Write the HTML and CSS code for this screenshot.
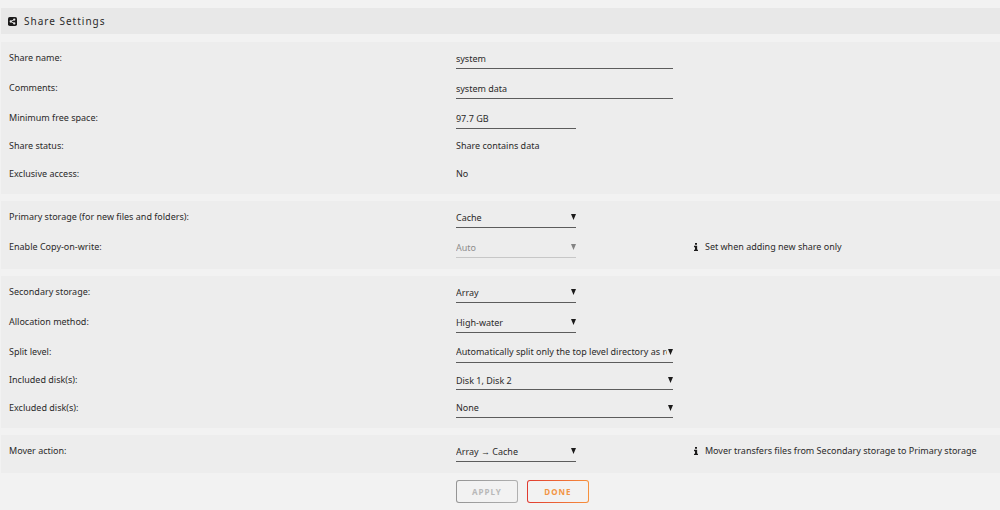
FILE: index.html
```html
<!DOCTYPE html>
<html lang="en">
<head>
<meta charset="utf-8">
<title>Share Settings</title>
<link rel="stylesheet" href="styles.css">
</head>
<body>
<header class="title-bar">
  <svg class="title-icon" viewBox="0 0 18 18" aria-hidden="true"><rect width="18" height="18" rx="3.5" fill="#1c1b1b"/><path d="M12.5 5.200 5.500 9l7 3.800" fill="none" stroke="#e8e8e8" stroke-width="1.800"/><circle cx="12.500" cy="5.200" r="2.300" fill="#e8e8e8"/><circle cx="5.500" cy="9" r="2.300" fill="#e8e8e8"/><circle cx="12.500" cy="12.800" r="2.300" fill="#e8e8e8"/></svg>
  <h1 class="title">Share Settings</h1>
</header>
<form class="settings">
  <section class="panel">
    <div class="row"><label class="label" for="name">Share name:</label><input class="field wide" id="name" type="text" value="system"></div>
    <div class="row"><label class="label" for="comments">Comments:</label><input class="field wide" id="comments" type="text" value="system data"></div>
    <div class="row short"><label class="label" for="free">Minimum free space:</label><input class="field narrow" id="free" type="text" value="97.7 GB"></div>
    <div class="row compact"><span class="label">Share status:</span><span class="value">Share contains data</span></div>
    <div class="row compact"><span class="label">Exclusive access:</span><span class="value">No</span></div>
  </section>
  <section class="panel">
    <div class="row"><label class="label" for="primary">Primary storage (for new files and folders):</label><select class="field narrow" id="primary"><option>Cache</option></select></div>
    <div class="row"><label class="label" for="cow">Enable Copy-on-write:</label><select class="field narrow" id="cow" disabled><option>Auto</option></select>
      <span class="note"><svg class="info-icon" viewBox="0 0 6 12" aria-hidden="true"><path d="M1.500 0h3v2.600h-3zM0 4.200h4.700v5.800H6v2H0v-2h1.500V6.200H0z" fill="#1c1b1b"/></svg>Set when adding new share only</span></div>
  </section>
  <section class="panel">
    <div class="row"><label class="label" for="secondary">Secondary storage:</label><select class="field narrow" id="secondary"><option>Array</option></select></div>
    <div class="row"><label class="label" for="allocation">Allocation method:</label><select class="field narrow" id="allocation"><option>High-water</option></select></div>
    <div class="row short"><label class="label" for="split">Split level:</label><select class="field wide" id="split"><option>Automatically split only the top level directory as required</option></select></div>
    <div class="row compact"><label class="label" for="included">Included disk(s):</label><select class="field wide" id="included"><option>Disk 1, Disk 2</option></select></div>
    <div class="row compact"><label class="label" for="excluded">Excluded disk(s):</label><select class="field wide" id="excluded"><option>None</option></select></div>
  </section>
  <section class="panel">
    <div class="row"><label class="label" for="mover">Mover action:</label><select class="field narrow" id="mover"><option>Array → Cache</option></select>
      <span class="note"><svg class="info-icon" viewBox="0 0 6 12" aria-hidden="true"><path d="M1.500 0h3v2.600h-3zM0 4.200h4.700v5.800H6v2H0v-2h1.500V6.200H0z" fill="#1c1b1b"/></svg>Mover transfers files from Secondary storage to Primary storage</span></div>
  </section>
  <div class="actions">
    <button class="btn" type="submit" disabled>APPLY</button>
    <button class="btn btn-done" type="button">DONE</button>
  </div>
</form>
</body>
</html>
```
FILE: styles.css
```css
* {
  box-sizing: border-box;
}

body {
  --label-width: calc(45% + 1px);
  margin: 0;
  padding: 8px 0 0 1px;
  background: #f2f2f2;
  color: #2b2a2a;
  font-family: "Noto Sans", "Open Sans", sans-serif;
  font-size: 9px;
  line-height: 14px;
}

.title-bar {
  display: flex;
  align-items: center;
  gap: 7px;
  height: 26px;
  margin-bottom: 8px;
  padding: 0 7px;
  background: #e8e8e8;
}

.title-icon {
  width: 9px;
  height: 9px;
}

.title {
  margin: 0;
  font-size: 10px;
  font-weight: 400;
  letter-spacing: 1px;
}

.settings {
  display: flex;
  flex-direction: column;
  gap: 7px;
}

.panel {
  padding: 1px 0 7px 8px;
  background: #ededed;
}

.row {
  display: grid;
  grid-template-columns: var(--label-width) 217px auto;
  align-items: center;
  height: 30px;
}

.short {
  height: 29px;
}

.compact {
  height: 28px;
}

.compact:last-child {
  height: 27px;
}

.field {
  height: 20px;
  margin: 2px 0 0;
  padding: 0;
  border: 0;
  border-bottom: 1px solid #5c5c5c;
  border-radius: 0;
  background: transparent;
  color: inherit;
  font: inherit;
  outline: 0;
}

select.field {
  padding-right: 6px;
  appearance: none;
  background: url("data:image/svg+xml,%3Csvg xmlns='http://www.w3.org/2000/svg' viewBox='0 0 5 6'%3E%3Cpath d='M0 0h5L2.500 6z' fill='%231c1b1b'/%3E%3C/svg%3E") right 6px / 5px 6px no-repeat;
}

select.field:disabled {
  opacity: 0.5;
  border-bottom-color: #a2a2a2;
}

.compact .field {
  height: 18px;
  background-position: right 5px;
}

.wide {
  width: 217px;
}

.narrow {
  width: 120px;
}

.note {
  display: flex;
  align-items: center;
  gap: 7px;
  padding-left: 21px;
}

.info-icon {
  width: 4px;
  height: 8px;
}

.actions {
  display: grid;
  grid-template-columns: var(--label-width) 62px 62px;
  padding-left: 8px;
}

.btn {
  grid-column: 2;
  width: 62px;
  height: 23px;
  padding: 0;
  border: 1px solid transparent;
  border-radius: 3px;
  background: linear-gradient(#f2f2f2, #f2f2f2) padding-box, linear-gradient(90deg, #959595, #b0b0b0) border-box;
  color: #b8b8b8;
  font: bold 8px/12px "Noto Sans", sans-serif;
  letter-spacing: 1px;
}

.btn-done {
  grid-column: 3;
  margin-left: 9px;
  background: linear-gradient(#f2f2f2, #f2f2f2) padding-box, linear-gradient(90deg, #e03a30, #f7913c) border-box;
  color: #f39544;
}
```
